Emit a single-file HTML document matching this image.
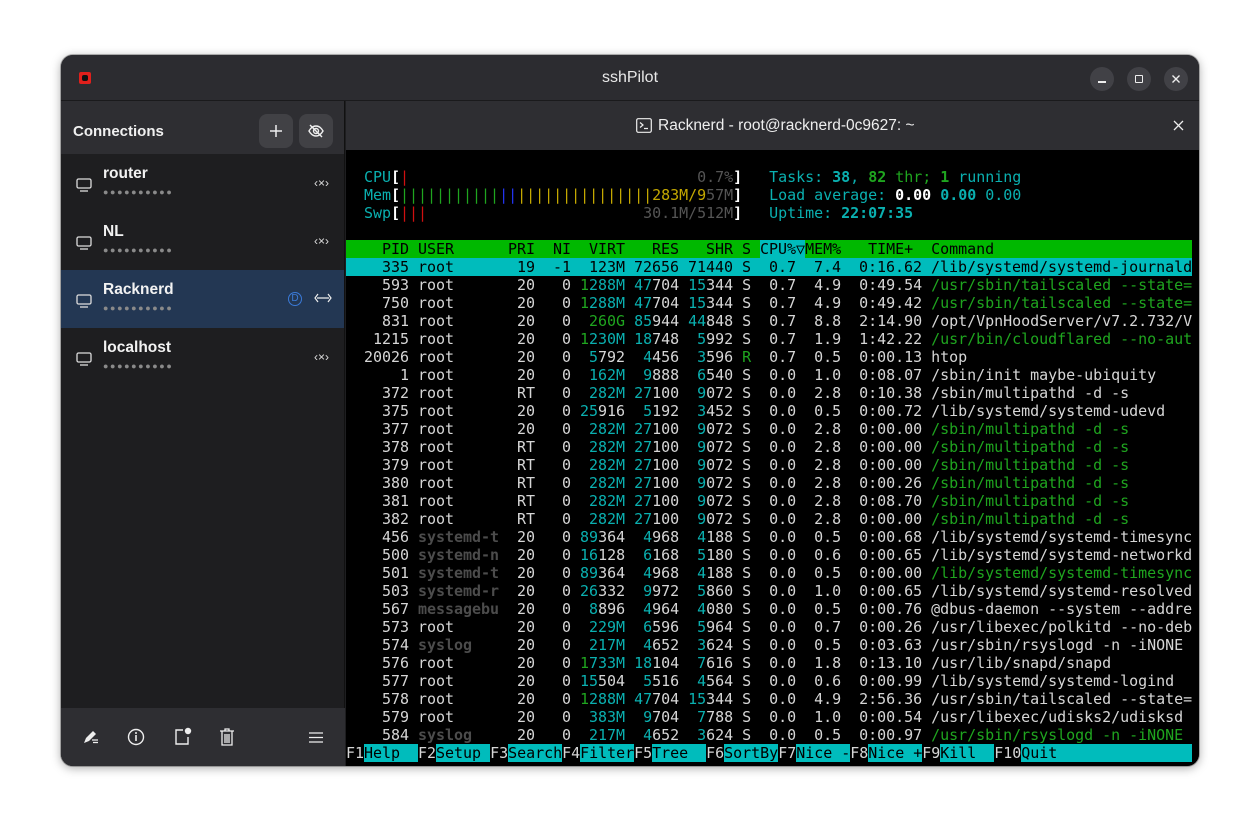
<!DOCTYPE html>
<html><head><meta charset="utf-8"><style>
*{margin:0;padding:0;box-sizing:border-box}
body{width:1260px;height:833px;background:#fff;position:relative;overflow:hidden;font-family:"Liberation Sans","DejaVu Sans",sans-serif}
.win{position:absolute;left:61px;top:55px;width:1138px;height:711px;border-radius:12px;overflow:hidden;background:#1e1e20;box-shadow:0 2px 10px rgba(0,0,0,.35),0 0 0 1px rgba(0,0,0,.25)}
.tb{position:absolute;left:0;top:0;width:100%;height:46px;background:#2c2c30;border-bottom:1px solid #1a1a1c}
.title{position:absolute;left:0;right:0;top:14px;text-align:center;color:#e8e8e8;font-size:16px}
.wb{position:absolute;top:12px;width:24px;height:24px;border-radius:12px;background:#414146}
.side{position:absolute;left:0;top:46px;width:284px;height:665px;background:#1e1e20;border-right:1px solid #111}
.sh{height:53px;background:#2e2e32;position:relative}
.sh .t{position:absolute;left:12px;top:22px;color:#f0f0f0;font-weight:bold;font-size:15px}
.btn{position:absolute;top:13px;width:34px;height:34px;border-radius:8px;background:#414145}
.row{height:58px;position:relative}
.row.sel{background:#233753}
.row .n{position:absolute;left:42px;top:11px;color:#f2f2f2;font-weight:bold;font-size:15.5px}
.row .d{position:absolute;left:42px;top:33px;color:#8a8a8a;font-size:9px;letter-spacing:1.6px}
.row svg.m{position:absolute;left:15px;top:24px}
.row .r{position:absolute;left:253px;top:22px;color:#ddd;font-size:12px}
.bb{position:absolute;left:0;bottom:0;width:284px;height:58px;background:#2e2e32}
.th{position:absolute;left:285px;top:46px;width:853px;height:49px;background:#2e2e32}
.term{position:absolute;left:285px;top:95px;width:853px;height:616px;background:#000;font-family:"DejaVu Sans Mono","Liberation Mono",monospace;font-size:15px;line-height:18px;color:#d6d6d6;letter-spacing:-0.03px}
.term div{height:18px;width:846px;overflow:hidden;white-space:pre}
.c{color:#0ab0b0}.g{color:#1fa51f}.k{color:#4c4c4c;font-weight:bold}.y{color:#c4a800}.r{color:#d01010}.bl{color:#2233ee}.gr{color:#555}.w{color:#fff;font-weight:bold}.cb{color:#0ab0b0;font-weight:bold}.gb{color:#1fa51f;font-weight:bold}
.hl{background:#00bcbc;color:#000}
.hd{background:#00b800;color:#000}
.hc{background:#00bcbc}
.fk span{background:#00bcbc;color:#000}
</style></head><body>
<div class="win">
 <div class="tb">
  <div style="position:absolute;left:18px;top:17px;width:12px;height:12px;background:#e0201c;border-radius:2px"><div style="position:absolute;left:3px;top:3px;width:6px;height:6px;background:#111;border-radius:2px"></div></div>
  <div class="title">sshPilot</div>
  <div class="wb" style="left:1029px"><div style="position:absolute;left:8px;top:14px;width:8px;height:1.5px;background:#eee"></div></div>
  <div class="wb" style="left:1066px"><div style="position:absolute;left:8px;top:8px;width:8px;height:8px;border:1.5px solid #eee;border-radius:1px"></div></div>
  <div class="wb" style="left:1103px"><svg width="24" height="24"><path d="M8.5 8.5l7 7M15.5 8.5l-7 7" stroke="#eee" stroke-width="1.4"/></svg></div>
 </div>
 <div class="side">
  <div class="sh"><div class="t">Connections</div>
   <div class="btn" style="left:198px"><svg width="34" height="34"><path d="M17 11v12M11 17h12" stroke="#eee" stroke-width="1.5"/></svg></div>
   <div class="btn" style="left:238px"><svg width="34" height="34"><path d="M10 17c2-3.5 4.5-5 7-5s5 1.5 7 5c-2 3.5-4.5 5-7 5s-5-1.5-7-5z" fill="none" stroke="#eee" stroke-width="1.4"/><circle cx="17" cy="17" r="2.5" fill="none" stroke="#eee" stroke-width="1.4"/><path d="M11 11l12 12" stroke="#eee" stroke-width="1.4"/></svg></div>
  </div>
  <div class="row"><svg class="m" width="16" height="14"><rect x="1" y="1" width="14" height="9" rx="1.5" fill="none" stroke="#ddd" stroke-width="1.3"/><path d="M4 13h8" stroke="#ddd" stroke-width="1.3"/></svg><div class="n">router</div><div class="d">●●●●●●●●●●</div><div class="r">‹×›</div></div>
  <div class="row"><svg class="m" width="16" height="14"><rect x="1" y="1" width="14" height="9" rx="1.5" fill="none" stroke="#ddd" stroke-width="1.3"/><path d="M4 13h8" stroke="#ddd" stroke-width="1.3"/></svg><div class="n">NL</div><div class="d">●●●●●●●●●●</div><div class="r">‹×›</div></div>
  <div class="row sel"><svg class="m" width="16" height="14"><rect x="1" y="1" width="14" height="9" rx="1.5" fill="none" stroke="#ddd" stroke-width="1.3"/><path d="M4 13h8" stroke="#ddd" stroke-width="1.3"/></svg><div class="n">Racknerd</div><div class="d">●●●●●●●●●●</div>
   <div style="position:absolute;left:227px;top:22px;width:14px;height:14px;border:1px solid #3a7ad8;border-radius:7px;color:#3a7ad8;font-size:10px;text-align:center;line-height:12px">D</div>
   <svg style="position:absolute;left:253px;top:23px" width="18" height="10"><path d="M4 1L1 5l3 4M14 1l3 4-3 4M3 5h12" fill="none" stroke="#eee" stroke-width="1.2"/></svg></div>
  <div class="row"><svg class="m" width="16" height="14"><rect x="1" y="1" width="14" height="9" rx="1.5" fill="none" stroke="#ddd" stroke-width="1.3"/><path d="M4 13h8" stroke="#ddd" stroke-width="1.3"/></svg><div class="n">localhost</div><div class="d">●●●●●●●●●●</div><div class="r">‹×›</div></div>
  <div class="bb">
   <svg style="position:absolute;left:21px;top:21px" width="18" height="16"><path d="M2 14l2-5 7-7 3 3-7 7z" fill="#eee"/><path d="M10 11h6M11 13.5h5" stroke="#eee" stroke-width="1.2"/></svg>
   <svg style="position:absolute;left:66px;top:20px" width="18" height="18"><circle cx="9" cy="9" r="7.5" fill="none" stroke="#eee" stroke-width="1.4"/><path d="M8 5h2M9 7v6" stroke="#eee" stroke-width="1.6"/></svg>
   <svg style="position:absolute;left:113px;top:19px" width="18" height="19"><path d="M9 3H2v14h12v-7" fill="none" stroke="#eee" stroke-width="1.4"/><circle cx="14" cy="4" r="3.2" fill="#eee"/></svg>
   <svg style="position:absolute;left:158px;top:19px" width="16" height="19"><path d="M1 4h14M6 4V2h4v2M3 4v14h10V4M6 7v9M8 7v9M10 7v9" fill="none" stroke="#eee" stroke-width="1.3"/></svg>
   <svg style="position:absolute;left:248px;top:24px" width="14" height="11"><path d="M0 1h14M0 5.5h14M0 10h14" stroke="#eee" stroke-width="1.3"/></svg>
  </div>
 </div>
 <div class="th">
  <svg style="position:absolute;left:290px;top:17px" width="16" height="15"><rect x="0.7" y="0.7" width="14.6" height="13.6" rx="1.5" fill="none" stroke="#eee" stroke-width="1.2"/><path d="M4 4.5l3 2.5-3 2.5M8 10.5h4" fill="none" stroke="#eee" stroke-width="1.2"/></svg>
  <div style="position:absolute;left:312px;top:16px;color:#eee;font-size:15.5px">Racknerd - root@racknerd-0c9627: ~</div>
  <svg style="position:absolute;left:827px;top:19px" width="11" height="11"><path d="M1 1l9 9M10 1l-9 9" stroke="#eee" stroke-width="1.3"/></svg>
 </div>
 <div class="term"><div>&#160;</div><div>  <span class="c">CPU</span><span class="w">[</span><span class="r">|</span>                                <span class="gr">0.7%</span><span class="w">]</span>   <span class="c">Tasks: </span><span class="cb">38</span><span class="c">, </span><span class="gb">82</span><span class="g"> thr; </span><span class="gb">1</span><span class="c"> running</span></div><div>  <span class="c">Mem</span><span class="w">[</span><span class="g">|||||||||||</span><span class="bl">||</span><span class="y">|||||||||||||||283M/9</span><span class="gr">57M</span><span class="w">]</span>   <span class="c">Load average: </span><span class="w">0.00 </span><span class="cb">0.00 </span><span class="c">0.00</span></div><div>  <span class="c">Swp</span><span class="w">[</span><span class="r">|||</span>                        <span class="gr">30.1M/512M</span><span class="w">]</span>   <span class="c">Uptime: </span><span class="cb">22:07:35</span></div><div>&#160;</div><div class="hd">    PID USER      PRI  NI  VIRT   RES   SHR S <span class="hc">CPU%▽</span>MEM%   TIME+  Command                      </div><div class="hl">    335 root       19  -1  123M 72656 71440 S  0.7  7.4  0:16.62 /lib/systemd/systemd-journald</div><div>    593 root       20   0 <span class="g">1</span><span class="c">288M</span> <span class="c">47</span>704 <span class="c">15</span>344 S  0.7  4.9  0:49.54 <span class="g">/usr/sbin/tailscaled --state=</span></div><div>    750 root       20   0 <span class="g">1</span><span class="c">288M</span> <span class="c">47</span>704 <span class="c">15</span>344 S  0.7  4.9  0:49.42 <span class="g">/usr/sbin/tailscaled --state=</span></div><div>    831 root       20   0  <span class="g">260G</span> <span class="c">85</span>944 <span class="c">44</span>848 S  0.7  8.8  2:14.90 /opt/VpnHoodServer/v7.2.732/V</div><div>   1215 root       20   0 <span class="g">1</span><span class="c">230M</span> <span class="c">18</span>748  <span class="c">5</span>992 S  0.7  1.9  1:42.22 <span class="g">/usr/bin/cloudflared --no-aut</span></div><div>  20026 root       20   0  <span class="c">5</span>792  <span class="c">4</span>456  <span class="c">3</span>596 <span class="g">R</span>  0.7  0.5  0:00.13 htop</div><div>      1 root       20   0  <span class="c">162M</span>  <span class="c">9</span>888  <span class="c">6</span>540 S  0.0  1.0  0:08.07 /sbin/init maybe-ubiquity</div><div>    372 root       RT   0  <span class="c">282M</span> <span class="c">27</span>100  <span class="c">9</span>072 S  0.0  2.8  0:10.38 /sbin/multipathd -d -s</div><div>    375 root       20   0 <span class="c">25</span>916  <span class="c">5</span>192  <span class="c">3</span>452 S  0.0  0.5  0:00.72 /lib/systemd/systemd-udevd</div><div>    377 root       20   0  <span class="c">282M</span> <span class="c">27</span>100  <span class="c">9</span>072 S  0.0  2.8  0:00.00 <span class="g">/sbin/multipathd -d -s</span></div><div>    378 root       RT   0  <span class="c">282M</span> <span class="c">27</span>100  <span class="c">9</span>072 S  0.0  2.8  0:00.00 <span class="g">/sbin/multipathd -d -s</span></div><div>    379 root       RT   0  <span class="c">282M</span> <span class="c">27</span>100  <span class="c">9</span>072 S  0.0  2.8  0:00.00 <span class="g">/sbin/multipathd -d -s</span></div><div>    380 root       RT   0  <span class="c">282M</span> <span class="c">27</span>100  <span class="c">9</span>072 S  0.0  2.8  0:00.26 <span class="g">/sbin/multipathd -d -s</span></div><div>    381 root       RT   0  <span class="c">282M</span> <span class="c">27</span>100  <span class="c">9</span>072 S  0.0  2.8  0:08.70 <span class="g">/sbin/multipathd -d -s</span></div><div>    382 root       RT   0  <span class="c">282M</span> <span class="c">27</span>100  <span class="c">9</span>072 S  0.0  2.8  0:00.00 <span class="g">/sbin/multipathd -d -s</span></div><div>    456 <span class="k">systemd-t</span>  20   0 <span class="c">89</span>364  <span class="c">4</span>968  <span class="c">4</span>188 S  0.0  0.5  0:00.68 /lib/systemd/systemd-timesync</div><div>    500 <span class="k">systemd-n</span>  20   0 <span class="c">16</span>128  <span class="c">6</span>168  <span class="c">5</span>180 S  0.0  0.6  0:00.65 /lib/systemd/systemd-networkd</div><div>    501 <span class="k">systemd-t</span>  20   0 <span class="c">89</span>364  <span class="c">4</span>968  <span class="c">4</span>188 S  0.0  0.5  0:00.00 <span class="g">/lib/systemd/systemd-timesync</span></div><div>    503 <span class="k">systemd-r</span>  20   0 <span class="c">26</span>332  <span class="c">9</span>972  <span class="c">5</span>860 S  0.0  1.0  0:00.65 /lib/systemd/systemd-resolved</div><div>    567 <span class="k">messagebu</span>  20   0  <span class="c">8</span>896  <span class="c">4</span>964  <span class="c">4</span>080 S  0.0  0.5  0:00.76 @dbus-daemon --system --addre</div><div>    573 root       20   0  <span class="c">229M</span>  <span class="c">6</span>596  <span class="c">5</span>964 S  0.0  0.7  0:00.26 /usr/libexec/polkitd --no-deb</div><div>    574 <span class="k">syslog</span>     20   0  <span class="c">217M</span>  <span class="c">4</span>652  <span class="c">3</span>624 S  0.0  0.5  0:03.63 /usr/sbin/rsyslogd -n -iNONE</div><div>    576 root       20   0 <span class="g">1</span><span class="c">733M</span> <span class="c">18</span>104  <span class="c">7</span>616 S  0.0  1.8  0:13.10 /usr/lib/snapd/snapd</div><div>    577 root       20   0 <span class="c">15</span>504  <span class="c">5</span>516  <span class="c">4</span>564 S  0.0  0.6  0:00.99 /lib/systemd/systemd-logind</div><div>    578 root       20   0 <span class="g">1</span><span class="c">288M</span> <span class="c">47</span>704 <span class="c">15</span>344 S  0.0  4.9  2:56.36 /usr/sbin/tailscaled --state=</div><div>    579 root       20   0  <span class="c">383M</span>  <span class="c">9</span>704  <span class="c">7</span>788 S  0.0  1.0  0:00.54 /usr/libexec/udisks2/udisksd</div><div>    584 <span class="k">syslog</span>     20   0  <span class="c">217M</span>  <span class="c">4</span>652  <span class="c">3</span>624 S  0.0  0.5  0:00.97 <span class="g">/usr/sbin/rsyslogd -n -iNONE</span></div><div class="fk">F1<span>Help  </span>F2<span>Setup </span>F3<span>Search</span>F4<span>Filter</span>F5<span>Tree  </span>F6<span>SortBy</span>F7<span>Nice -</span>F8<span>Nice +</span>F9<span>Kill  </span>F10<span>Quit                       </span></div></div>
</div>
</body></html>
